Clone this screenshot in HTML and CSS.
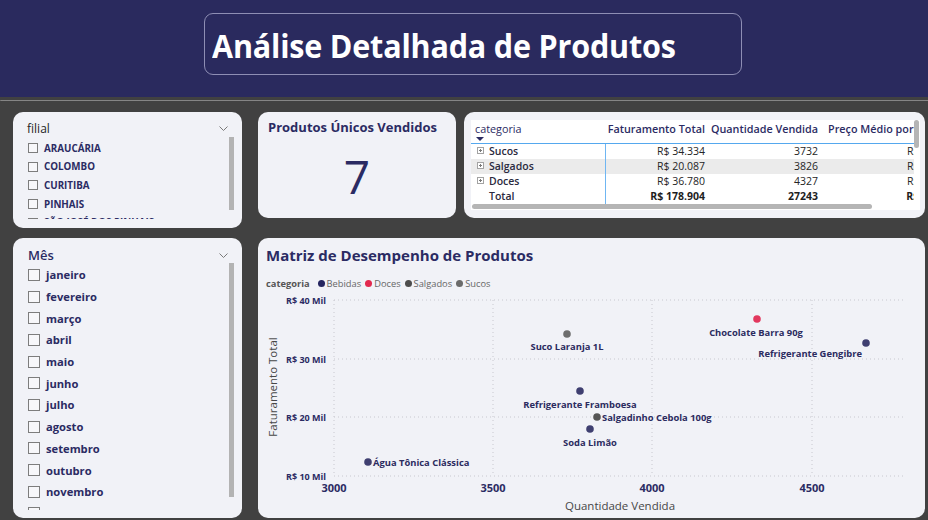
FILE: index.html
```html
<!DOCTYPE html>
<html lang="pt-BR">
<head>
<meta charset="utf-8">
<title>Análise Detalhada de Produtos</title>
<link rel="stylesheet" href="styles.css">
</head>
<body>
<header class="topbar">
  <div class="title-box"><h1 class="title">Análise Detalhada de Produtos</h1></div>
</header>
<div class="divider"></div>
<main class="dash">
  <div class="col-left">
    <section class="panel slicer slicer-filial">
      <div class="slicer-head">
        <span class="slicer-name">filial</span>
        <svg class="chev" width="9" height="5" viewBox="0 0 9 5"><polyline points="0.5,0.5 4.5,4.5 8.5,0.5" fill="none" stroke="#7a7a7a" stroke-width="1"/></svg>
      </div>
      <div class="slicer-body">
        <ul class="items">
          <li class="item"><span class="box"></span><span class="lbl">ARAUCÁRIA</span></li>
          <li class="item"><span class="box"></span><span class="lbl">COLOMBO</span></li>
          <li class="item"><span class="box"></span><span class="lbl">CURITIBA</span></li>
          <li class="item"><span class="box"></span><span class="lbl">PINHAIS</span></li>
          <li class="item"><span class="box"></span><span class="lbl">SÃO JOSÉ DOS PINHAIS</span></li>
        </ul>
        <div class="vscroll"></div>
      </div>
    </section>
    <section class="panel slicer slicer-mes">
      <div class="slicer-head">
        <span class="slicer-name">Mês</span>
        <svg class="chev" width="9" height="5" viewBox="0 0 9 5"><polyline points="0.5,0.5 4.5,4.5 8.5,0.5" fill="none" stroke="#7a7a7a" stroke-width="1"/></svg>
      </div>
      <div class="slicer-body">
        <ul class="items">
          <li class="item"><span class="box"></span><span class="lbl">janeiro</span></li>
          <li class="item"><span class="box"></span><span class="lbl">fevereiro</span></li>
          <li class="item"><span class="box"></span><span class="lbl">março</span></li>
          <li class="item"><span class="box"></span><span class="lbl">abril</span></li>
          <li class="item"><span class="box"></span><span class="lbl">maio</span></li>
          <li class="item"><span class="box"></span><span class="lbl">junho</span></li>
          <li class="item"><span class="box"></span><span class="lbl">julho</span></li>
          <li class="item"><span class="box"></span><span class="lbl">agosto</span></li>
          <li class="item"><span class="box"></span><span class="lbl">setembro</span></li>
          <li class="item"><span class="box"></span><span class="lbl">outubro</span></li>
          <li class="item"><span class="box"></span><span class="lbl">novembro</span></li>
          <li class="item"><span class="box"></span><span class="lbl">dezembro</span></li>
        </ul>
        <div class="vscroll"></div>
      </div>
    </section>
  </div>

  <div class="col-right">
    <div class="top-row">
      <section class="panel card">
        <h2 class="card-title">Produtos Únicos Vendidos</h2>
        <div class="card-value">7</div>
      </section>

      <section class="panel table-panel">
        <div class="grid-wrap">
          <div class="viewport">
            <div class="tgrid">
              <div class="th th-cat">categoria<span class="sort"></span></div>
              <div class="th num">Faturamento Total</div>
              <div class="th num">Quantidade Vendida</div>
              <div class="th th-last">Preço Médio por Unidade</div>

              <div class="td cat"><svg class="exp" width="7" height="7" viewBox="0 0 7 7"><rect x="0.5" y="0.5" width="6" height="6" fill="#fff" stroke="#a3a3a3"/><path d="M2 3.5h3M3.5 2v3" stroke="#7a7a7a"/></svg>Sucos</div>
              <div class="td num">R$ 34.334</div>
              <div class="td num">3732</div>
              <div class="td num last">R$ 9,20</div>

              <div class="td cat alt"><svg class="exp" width="7" height="7" viewBox="0 0 7 7"><rect x="0.5" y="0.5" width="6" height="6" fill="#fff" stroke="#a3a3a3"/><path d="M2 3.5h3M3.5 2v3" stroke="#7a7a7a"/></svg>Salgados</div>
              <div class="td num alt">R$ 20.087</div>
              <div class="td num alt">3826</div>
              <div class="td num last alt">R$ 5,25</div>

              <div class="td cat"><svg class="exp" width="7" height="7" viewBox="0 0 7 7"><rect x="0.5" y="0.5" width="6" height="6" fill="#fff" stroke="#a3a3a3"/><path d="M2 3.5h3M3.5 2v3" stroke="#7a7a7a"/></svg>Doces</div>
              <div class="td num">R$ 36.780</div>
              <div class="td num">4327</div>
              <div class="td num last">R$ 8,50</div>

              <div class="td cat total"><span class="exp-space"></span>Total</div>
              <div class="td num total">R$ 178.904</div>
              <div class="td num total">27243</div>
              <div class="td num last total">R$ 6,57</div>
            </div>
            <div class="hscroll"></div>
          </div>
          <div class="vtrack"><div class="vthumb"></div></div>
        </div>
      </section>
    </div>

    <section class="panel chart">
      <div class="chart-head">
        <h2 class="chart-title">Matriz de Desempenho de Produtos</h2>
        <div class="legend">
          <span class="legend-title">categoria</span>
          <span class="lg"><i class="dot c-beb"></i>Bebidas</span>
          <span class="lg"><i class="dot c-doc"></i>Doces</span>
          <span class="lg"><i class="dot c-sal"></i>Salgados</span>
          <span class="lg"><i class="dot c-suc"></i>Sucos</span>
        </div>
      </div>
      <svg class="plot" width="667" height="228" viewBox="258 290 667 228">
        <g class="grid">
          <line x1="334" y1="300" x2="905" y2="300"/>
          <line x1="334" y1="359" x2="905" y2="359"/>
          <line x1="334" y1="417" x2="905" y2="417"/>
          <line x1="334" y1="476" x2="905" y2="476"/>
          <line x1="334" y1="300" x2="334" y2="476"/>
          <line x1="493" y1="300" x2="493" y2="476"/>
          <line x1="652" y1="300" x2="652" y2="476"/>
          <line x1="812" y1="300" x2="812" y2="476"/>
        </g>
        <g class="ylab">
          <text x="326" y="300">R$ 40 Mil</text>
          <text x="326" y="359">R$ 30 Mil</text>
          <text x="326" y="417">R$ 20 Mil</text>
          <text x="326" y="476">R$ 10 Mil</text>
        </g>
        <g class="xlab">
          <text x="334" y="487">3000</text>
          <text x="493" y="487">3500</text>
          <text x="652" y="487">4000</text>
          <text x="812" y="487">4500</text>
        </g>
        <text class="axis-title" x="620" y="505">Quantidade Vendida</text>
        <text class="axis-title" x="0" y="0" transform="translate(272 387) rotate(-90)">Faturamento Total</text>

        <g class="pts">
          <circle class="p-suc" cx="567" cy="334" r="3.8"/>
          <circle class="p-doc" cx="757" cy="319" r="3.8"/>
          <circle class="p-beb" cx="866" cy="343" r="3.8"/>
          <circle class="p-beb" cx="580" cy="391" r="3.8"/>
          <circle class="p-sal" cx="597" cy="417" r="3.8"/>
          <circle class="p-beb" cx="590" cy="429" r="3.8"/>
          <circle class="p-beb" cx="368" cy="462" r="3.8"/>
        </g>
        <g class="dlab">
          <text class="mid" x="567" y="346">Suco Laranja 1L</text>
          <text class="mid" x="756" y="332">Chocolate Barra 90g</text>
          <text class="end" x="862" y="353">Refrigerante Gengibre</text>
          <text class="mid" x="580" y="404">Refrigerante Framboesa</text>
          <text class="start" x="602" y="417">Salgadinho Cebola 100g</text>
          <text class="mid" x="590" y="442">Soda Limão</text>
          <text class="start" x="373" y="462">Água Tônica Clássica</text>
        </g>
      </svg>
    </section>
  </div>
</main>
</body>
</html>
```

FILE: styles.css
```css
* { box-sizing: border-box; margin: 0; padding: 0; }

html, body { width: 928px; height: 520px; overflow: hidden; }

body {
  background: #414141;
  font-family: "Open Sans", "Noto Sans", sans-serif;
  color: #2b2b63;
}

/* ---------- header ---------- */
.topbar {
  height: 97px;
  background: #2a2a5e;
  padding: 13px 0 0 204px;
}
.title-box {
  width: 538px;
  height: 62px;
  border: 1px solid #8e8eb4;
  border-radius: 9px;
  padding-left: 7px;
  display: flex;
  align-items: center;
}
.title {
  color: #ffffff;
  font-size: 33px;
  font-weight: 700;
  line-height: 1;
  white-space: nowrap;
  display: inline-block;
  transform: scaleX(0.925);
  transform-origin: left center;
  letter-spacing: -0.2px;
  margin-top: 2px;
}

.divider {
  margin-top: 3px;
  height: 1px;
  background: #858585;
  border-top-left-radius: 4px;
}

/* ---------- layout ---------- */
.dash {
  display: flex;
  gap: 16px;
  padding: 11px 3px 0 13px;
}
.col-left {
  width: 229px;
  display: flex;
  flex-direction: column;
  gap: 10px;
}
.col-right {
  width: 667px;
  display: flex;
  flex-direction: column;
  gap: 20px;
}
.top-row {
  display: flex;
  gap: 8px;
  height: 106px;
}
.panel {
  background: #f1f2f7;
  border-radius: 10px;
  overflow: hidden;
}

/* ---------- slicers ---------- */
.slicer { display: flex; flex-direction: column; padding: 8px 8px 0 14px; }
.slicer-filial { height: 116px; }
.slicer-mes { height: 280px; padding-left: 15px; }

.slicer-head {
  display: flex;
  align-items: center;
  justify-content: space-between;
  height: 17px;
  padding-right: 6px;
}
.slicer-mes .slicer-head { height: 18px; }
.slicer-name { font-size: 12px; color: #252525; }
.slicer-mes .slicer-name { font-size: 13px; font-weight: 600; color: #2b2b63; }
.chev { display: block; }

.slicer-body { display: flex; }
.items { list-style: none; flex: 1; overflow: hidden; }
.slicer-filial .items { height: 82px; padding-top: 2px; }
.slicer-mes .items { height: 246px; }

.item {
  display: flex;
  align-items: center;
  gap: 6px;
  white-space: nowrap;
}
.slicer-filial .item { height: 18.6px; padding-left: 1px; }
.slicer-mes .item { height: 21.7px; }

.box {
  flex: none;
  width: 10px;
  height: 10px;
  border: 1px solid #7d7d7d;
  background: #f7f7fa;
}
.slicer-mes .box { width: 12px; height: 12px; }

.lbl { font-weight: 700; color: #2b2b63; }
.slicer-filial .lbl { font-size: 9.8px; }
.slicer-mes .lbl { font-size: 11.2px; }

.vscroll {
  width: 5px;
  background: #b3b3b3;
  flex: none;
}
.slicer-filial .vscroll { height: 73px; }
.slicer-mes .vscroll { height: 234px; margin-top: -1px; }

/* ---------- card ---------- */
.card {
  width: 198px;
  display: flex;
  flex-direction: column;
  padding: 6px 10px 0;
}
.card-title {
  font-size: 13px;
  font-weight: 700;
  line-height: 18px;
  color: #2b2b63;
  white-space: nowrap;
}
.card-value {
  flex: 1;
  display: flex;
  align-items: center;
  justify-content: center;
  font-size: 46px;
  line-height: 1;
  font-weight: 400;
  color: #2b2b63;
  padding-bottom: 2px;
}

/* ---------- table ---------- */
.table-panel { flex: 1; padding: 8px 5px 8px 7px; }
.grid-wrap {
  height: 90px;
  background: #ffffff;
  display: flex;
}
.viewport { width: 443px; overflow: hidden; }
.tgrid {
  display: grid;
  grid-template-columns: 135px 103px 113px 140px;
  grid-template-rows: 24px 15px 15px 15px 15px;
  width: 491px;
}
.th {
  font-size: 10.8px;
  line-height: 14px;
  padding-top: 2px;
  border-bottom: 1px solid #55a8ee;
  color: #2b2b63;
  white-space: nowrap;
}
.th.num { text-align: right; padding-right: 4px; font-weight: 600; }
.th-cat { padding-left: 4px; position: relative; }
.th-last { padding-left: 6px; font-weight: 600; }
.sort {
  position: absolute;
  left: 5px;
  top: 17px;
  width: 0;
  height: 0;
  border-left: 4px solid transparent;
  border-right: 4px solid transparent;
  border-top: 4px solid #2b2b63;
}
.td {
  font-size: 10.5px;
  line-height: 15px;
  color: #252525;
  white-space: nowrap;
}
.td.num { text-align: right; padding-right: 4px; }
.td.last { padding-right: 19px; }
.td.cat {
  display: flex;
  align-items: center;
  padding-left: 6px;
  border-right: 1px solid #6fb6f2;
  font-weight: 600;
  color: #2a2a3e;
}
.exp { flex: none; margin-right: 5px; margin-top: -3px; }
.exp-space { width: 12px; flex: none; }
.alt { background: #ebebeb; }
.total { font-weight: 700; color: #1e1e1e; }
.hscroll {
  width: 400px;
  height: 5px;
  background: #b5b5b5;
  border-radius: 3px;
  margin-left: 1px;
}
.vtrack { width: 6px; flex: none; }
.vthumb { width: 5px; height: 28px; background: #b5b5b5; border-radius: 3px; }

/* ---------- chart ---------- */
.chart { height: 280px; position: relative; }
.chart-head { padding: 7px 0 0 8px; }
.chart-title {
  font-size: 15px;
  font-weight: 700;
  line-height: 20px;
  color: #2b2b63;
  white-space: nowrap;
}
.legend {
  margin-top: 11px;
  height: 14px;
  display: flex;
  align-items: center;
  gap: 4px;
  font-size: 9.3px;
  color: #666666;
}
.legend-title { font-weight: 700; color: #555555; margin-right: 4px; }
.lg { display: flex; align-items: center; gap: 2px; }
.dot { display: block; width: 7px; height: 7px; border-radius: 50%; }
.c-beb { background: #252560; }
.c-doc { background: #e2294f; }
.c-sal { background: #4d4d4d; }
.c-suc { background: #6b6b6b; }

.plot { display: block; }
.plot text { font-family: "Open Sans", "Noto Sans", sans-serif; dominant-baseline: central; }
.grid line { stroke: #c8c8cf; stroke-width: 1; stroke-dasharray: 1 3; }
.ylab text { font-size: 9px; font-weight: 700; fill: #2b2b63; text-anchor: end; }
.xlab text { font-size: 11px; font-weight: 700; fill: #2b2b63; text-anchor: middle; }
.axis-title { font-size: 11.5px; fill: #474747; text-anchor: middle; }
.p-beb { fill: #3f3f70; }
.p-doc { fill: #e2385e; }
.p-sal { fill: #555555; }
.p-suc { fill: #6e6e6e; }
.dlab text { font-size: 9.4px; font-weight: 700; fill: #2b2b5f; }
.dlab .mid { text-anchor: middle; }
.dlab .end { text-anchor: end; }
.dlab .start { text-anchor: start; }
```
